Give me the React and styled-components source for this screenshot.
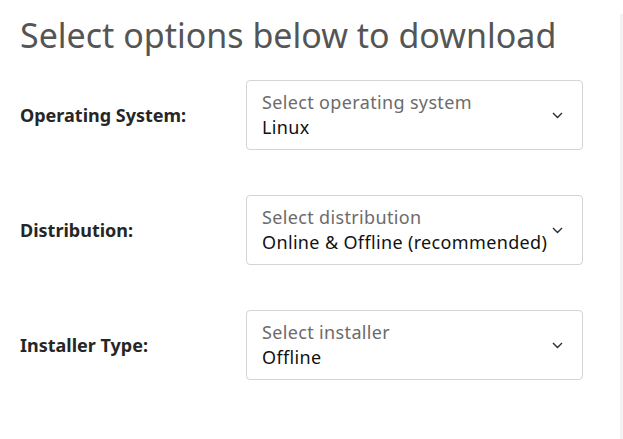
import React from 'react'
import styled, { createGlobalStyle } from 'styled-components'

const GlobalStyle = createGlobalStyle`
  html, body {
    margin: 0;
    padding: 0;
    background: #fff;
  }
  body {
    font-family: 'Noto Sans', 'Open Sans', sans-serif;
  }
`

const Page = styled.div`
  display: flex;
  width: 623px;
  height: 439px;
  overflow: hidden;
`

const Main = styled.div`
  width: 620px;
  padding: 12px 0 0 20px;
  box-sizing: border-box;
`

const Rail = styled.div`
  margin-top: 14px;
  width: 3px;
  background: #f2f2f2;
`

const Title = styled.h1`
  margin: 0 0 22px;
  font-size: 34px;
  font-weight: 400;
  line-height: 46px;
  color: #555;
`

const Form = styled.div`
  display: flex;
  flex-direction: column;
  gap: 45px;
`

const Row = styled.div`
  display: grid;
  grid-template-columns: 226px 337px;
  align-items: center;
`

const Label = styled.label`
  font-size: 18px;
  font-weight: 700;
  color: #262626;
`

const SelectBox = styled.div`
  position: relative;
  height: 70px;
  box-sizing: border-box;
  border: 1px solid #d4d4d4;
  border-radius: 4px;
  padding: 9px 15px 0;
  display: flex;
  flex-direction: column;
`

const Text = styled.span`
  font-size: 18px;
  line-height: 24.5px;
  letter-spacing: 0.35px;
  color: ${p => (p.$muted ? '#6b6b6b' : '#111')};
  white-space: nowrap;
`

const Chevron = styled.svg`
  position: absolute;
  right: 19px;
  top: 50%;
  margin-top: -3px;
  width: 11px;
  height: 7px;
`

const fields = [
  { label: 'Operating System:', placeholder: 'Select operating system', value: 'Linux' },
  { label: 'Distribution:', placeholder: 'Select distribution', value: 'Online & Offline (recommended)' },
  { label: 'Installer Type:', placeholder: 'Select installer', value: 'Offline' },
]

export default function App() {
  return (
    <>
      <GlobalStyle />
      <Page>
        <Main>
          <Title>Select options below to download</Title>
          <Form>
            {fields.map(f => (
              <Row key={f.label}>
                <Label>{f.label}</Label>
                <SelectBox>
                  <Text $muted>{f.placeholder}</Text>
                  <Text>{f.value}</Text>
                  <Chevron viewBox="0 0 11 7" fill="none">
                    <path d="M1 1l4.5 4.5L10 1" stroke="#2a2a3a" strokeWidth="1.4" />
                  </Chevron>
                </SelectBox>
              </Row>
            ))}
          </Form>
        </Main>
        <Rail />
      </Page>
    </>
  )
}
